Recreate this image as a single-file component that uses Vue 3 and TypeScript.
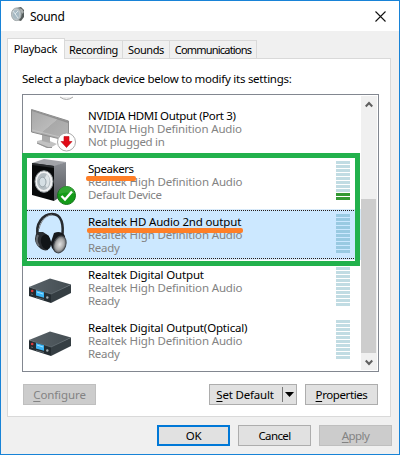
<script setup lang="ts">
type Device = { name: string; driver: string; status: string; icon: 'monitor' | 'speaker' | 'headphones' | 'receiver'; level: number; meter: boolean; selected?: boolean; cls: string }

const devices: Device[] = [
  { name: 'NVIDIA HDMI Output (Port 3)', driver: 'NVIDIA High Definition Audio', status: 'Not plugged in', icon: 'monitor', level: 0, meter: false, cls: 'nvidia' },
  { name: 'Speakers', driver: 'Realtek High Definition Audio', status: 'Default Device', icon: 'speaker', level: 2, meter: true, cls: 'speakers' },
  { name: 'Realtek HD Audio 2nd output', driver: 'Realtek High Definition Audio', status: 'Ready', icon: 'headphones', level: 0, meter: true, selected: true, cls: 'second' },
  { name: 'Realtek Digital Output', driver: 'Realtek High Definition Audio', status: 'Ready', icon: 'receiver', level: 0, meter: true, cls: 'digital' },
  { name: 'Realtek Digital Output(Optical)', driver: 'Realtek High Definition Audio', status: 'Ready', icon: 'receiver', level: 0, meter: true, cls: 'optical' },
]
const tabs = ['Playback', 'Recording', 'Sounds', 'Communications']
</script>

<template>
  <div class="window">
    <header class="titlebar">
      <svg class="app-icon" width="14" height="16" viewBox="0 0 14 16">
        <path d="M5 1l5-1 3 3v7l-3 4-4-1z" fill="#555c5c" />
        <path d="M8 1l3 1 2 3-2 2z" fill="#a9afaf" />
        <ellipse cx="5.3" cy="7.3" rx="4.8" ry="6.3" fill="#bcc5c9" stroke="#a3abad" />
        <ellipse cx="5" cy="7.5" rx="3.1" ry="4.3" fill="#a7bac4" />
        <path d="M2 4l5 7M7 4l-3 3" stroke="#dde6ea" />
      </svg>
      <h1>Sound</h1>
      <svg class="close" width="11" height="11" viewBox="0 0 11 11"><path d="M.5.5l10 10M10.5.5l-10 10" stroke="#111" stroke-width="1.1" /></svg>
    </header>

    <nav class="tabs">
      <div v-for="(t, i) in tabs" :key="t" class="tab" :class="['tab' + i, { active: i === 0 }]"><span>{{ t }}</span></div>
    </nav>

    <main class="panel">
      <p class="hint">Select a playback device below to modify its settings:</p>
      <div class="list">
        <div class="rows">
          <svg class="previous" width="18" height="5" viewBox="0 0 18 5"><path d="M2 0q6.500 5 13 0" fill="#eee" stroke="#aaa" /></svg>
          <div v-for="d in devices" :key="d.name" class="row" :class="[d.cls, { selected: d.selected }]">
            <div class="icon">
              <svg v-if="d.icon === 'monitor'" width="48" height="50" viewBox="0 0 48 50">
                <defs><linearGradient id="scr" x1="0" y1="0" x2="1" y2="1"><stop offset="0" stop-color="#a6a6a6" /><stop offset=".5" stop-color="#bababa" /><stop offset=".51" stop-color="#a9a9a9" /><stop offset="1" stop-color="#b5b5b5" /></linearGradient></defs>
                <path d="M9 38l8-2 12 5-6 3.500-5 0-9-4z" fill="#c2c2c2" /><path d="M9 39.500l11 4.500h4v1h-5L9 40.500z" fill="#929292" />
                <path d="M14 31l8 2v7l-8-2z" fill="#aaa" />
                <path d="M3.500 6.500L40.500 18v20L3.500 29z" fill="url(#scr)" stroke="#8d8d8d" />
                <path d="M4 7l36 11.300V20L4 8z" fill="#8f8f8f" /><path d="M4 27l36 9" stroke="#ccc" stroke-width=".7" />
                <circle cx="38.500" cy="39" r="9" fill="#fff" stroke="#aaa" />
                <path d="M36 33.500h5v5h3l-5.500 6-5.500-6h3z" fill="#e10b17" stroke="#b80b13" stroke-width=".6" />
              </svg>
              <svg v-else-if="d.icon === 'speaker'" width="48" height="50" viewBox="0 0 48 50">
                <defs><linearGradient id="side" x2="0" y2="1"><stop stop-color="#8a8d93" /><stop offset="1" stop-color="#53565c" /></linearGradient></defs>
                <path d="M4 7l12-4 22 3-12 5z" fill="#a2a4a9" /><path d="M26 10l12-4v31L26 45z" fill="url(#side)" />
                <path d="M4 7l22 3v35L4 39z" fill="#080a0b" /><path d="M4 7l22 3v2L4 9z" fill="#292c2f" />
                <ellipse cx="16" cy="25.500" rx="9" ry="10.800" fill="#f1f2f3" stroke="#8f969a" />
                <ellipse cx="15.700" cy="25.500" rx="6.700" ry="8.500" fill="#b4bdc2" />
                <path d="M15 25l4-7q5 7 0 14z" fill="#dfe5e8" />
                <ellipse cx="14.500" cy="26" rx="3.500" ry="4.800" fill="#d5dfe4" stroke="#99a5ab" />
                <circle cx="38.500" cy="39.500" r="9" fill="#139b18" stroke="#14741b" />
                <path d="M30.500 38a8 8 0 0 1 16 0q-8-3-16 0" fill="#4ab348" opacity=".5" />
                <path d="M33.500 40l3.500 3.500 7-8" fill="none" stroke="#fff" stroke-width="2.400" />
              </svg>
              <svg v-else-if="d.icon === 'headphones'" width="48" height="48" viewBox="0 0 48 48">
                <defs><radialGradient id="cup"><stop stop-color="#e4e4e4" /><stop offset=".65" stop-color="#a8a8a8" /><stop offset="1" stop-color="#606366" /></radialGradient></defs>
                <path d="M10 26C7 14 15 4 24 4c10 0 12 11 10 24" fill="none" stroke="#272a2e" stroke-width="2.600" />
                <path d="M11 19C13 10 19 5 24 5" fill="none" stroke="#85898d" />
                <path d="M9 22q-4 7 0 13 5 7 11 5l2-6-1-8-6-4z" fill="#292c30" />
                <ellipse cx="18" cy="32" rx="5" ry="7.500" fill="#111417" transform="rotate(-12 18 32)" />
                <path d="M10 25q-3 6 1 11" fill="none" stroke="#65696e" stroke-width="2" />
                <path d="M26 23q7-3 11 3l-1 11-7 6q-7-4-6-11z" fill="#17191d" />
                <ellipse cx="32" cy="34.500" rx="6" ry="8.700" fill="url(#cup)" stroke="#45494e" transform="rotate(20 32 34)" />
              </svg>
              <svg v-else width="48" height="48" viewBox="0 0 48 48">
                <defs><linearGradient id="box"><stop stop-color="#596268" /><stop offset="1" stop-color="#444d52" /></linearGradient></defs>
                <path d="M1 25L22 16.500l21 6L23 33z" fill="url(#box)" /><path d="M23 32l20-9.500v8.500L23 41z" fill="#353e43" />
                <path d="M1 25l22 7v9L1 34z" fill="#242c31" /><path d="M1 25l22 7 20-9.500" fill="none" stroke="#7b858a" stroke-width=".5" />
                <path d="M8 28l8 2.300v5.500L8 33.500z" fill="#3bb4f4" /><path d="M9 29.500l6 2v1l-6-2z" fill="#a3e2ff" />
                <circle cx="4.200" cy="29" r="1.300" fill="#df3b3a" /><circle cx="19.300" cy="35.500" r="1.200" fill="#a6aeb2" /><path d="M3 32l2 .6M8 35.500l8 2" stroke="#68737a" stroke-width=".8" />
              </svg>
            </div>
            <div class="info">
              <div class="name"><span>{{ d.name }}</span></div>
              <div class="driver"><span>{{ d.driver }}</span></div>
              <div class="status"><span>{{ d.status }}</span></div>
            </div>
            <div v-if="d.meter" class="meter"><i v-for="n in 10" :key="n" :class="{ on: n > 10 - d.level }" /></div>
          </div>
        </div>
        <div class="scrollbar">
          <svg width="8" height="7" viewBox="0 0 8 7"><path d="M.7 5.500L4 2l3.300 3.500" fill="none" stroke="#606060" stroke-width="2.200" /></svg>
          <div class="thumb" />
          <svg width="8" height="7" viewBox="0 0 8 7"><path d="M.7 1.500L4 5l3.300-3.500" fill="none" stroke="#606060" stroke-width="2.200" /></svg>
        </div>
        <div class="highlight" />
        <div class="marker marker-a" />
        <div class="marker marker-b" />
      </div>
      <div class="actions">
        <button class="configure" disabled><span><u>C</u>onfigure</span></button>
        <button class="default"><span><u>S</u>et Default</span><b /><svg width="9" height="5" viewBox="0 0 9 5"><path d="M0 0h9L4.500 5z" /></svg></button>
        <button class="properties"><span><u>P</u>roperties</span></button>
      </div>
    </main>
    <footer class="footer">
      <button class="primary"><span>OK</span></button>
      <button class="cancel"><span>Cancel</span></button>
      <button class="apply" disabled><span><u>A</u>pply</span></button>
    </footer>
  </div>
</template>

<style>
body { margin: 0; background: #fff; }
</style>
<style scoped>
* { box-sizing: border-box; }
.window { width: 400px; height: 455px; border: 1px solid #1883d7; background: #f0f0f0; font: 11.5px/13px "Noto Sans", "Open Sans", sans-serif; color: #000; white-space: nowrap; }
.titlebar { height: 30px; background: #fff; display: flex; align-items: center; padding: 0 12px 0 10px; }
.app-icon { margin-top: -2px; }
h1 { margin: 0 0 0 5px; font-size: 12px; font-weight: 400; letter-spacing: -.3px; flex: 1; }
.close { margin-right: 1px; }
.tabs { height: 21px; margin-top: 6px; padding-left: 6px; display: flex; align-items: flex-end; position: relative; z-index: 1; font-size: 11px; letter-spacing: -.4px; }
.tab { height: 18px; border: 1px solid #d9d9d9; border-left: 0; border-bottom: 0; display: flex; justify-content: center; align-items: center; }
.tab0 { width: 58px; height: 21px; margin-bottom: -1px; padding: 0 1px 2px 0; border-left: 1px solid #d9d9d9; background: #fff; letter-spacing: -.25px; }
.tab1 { width: 58px; }
.tab2 { width: 47px; }
.tab3 { width: 87px; letter-spacing: -.8px; }
.panel { margin: 0 8px 0 6px; height: 359px; border: 1px solid #d9d9d9; background: #fff; padding: 12px 11px 0 14px; display: flex; flex-direction: column; }
.hint { margin: 0; height: 23px; line-height: 15px; letter-spacing: -.26px; }
.list { position: relative; width: 357px; height: 278px; flex: none; border: 1px solid #828790; display: flex; justify-content: space-between; padding: 1px; }
.rows { width: 337px; height: 274px; overflow: hidden; }
.previous { display: block; margin-left: 34px; height: 7px; }
.row { height: 53px; display: flex; padding-left: 4px; }
.row.selected { height: 51px; margin-bottom: 2px; background: #cce8ff; border: 1px solid #d9eaf9; padding-left: 3px; outline: 1px dotted #241b17; outline-offset: -2px; }
.icon { width: 48px; height: 48px; flex: none; }
.info { margin: 6px 0 0 12px; width: 222px; color: #838383; letter-spacing: -.16px; }
.name { color: #000; }
.nvidia .name { letter-spacing: -.36px; }
.speakers .name { letter-spacing: -.45px; }
.status { letter-spacing: -.3px; }
.selected .info { margin-top: 5px; }
.meter { margin: 5px 0 0 26px; width: 14px; display: flex; flex-direction: column; gap: 1px; }
.selected .meter { margin-top: 4px; }
.meter i { height: 3px; background: #c1dce3; }
.selected .meter i { background: #99cae2; }
.meter i.on { background: #339933; }
.scrollbar { width: 16px; height: 274px; background: #f0f0f0; display: flex; flex-direction: column; }
.scrollbar svg { margin: 5px 0 0 4px; flex: none; }
.scrollbar svg:last-child { margin-top: 6px; }
.thumb { width: 15px; height: 154px; margin-top: 91px; background: #cdcdcd; }
.highlight { position: absolute; left: -1px; top: 58px; width: 338px; height: 113px; border: 5px solid #22b14c; }
.marker { position: absolute; height: 5px; border-radius: 2px; background: #ff7f27; }
.marker-a { left: 63px; top: 81px; width: 50px; }
.marker-b { left: 64px; top: 133px; width: 156px; }
.actions { display: flex; padding: 12px 0 0 1px; }
button { height: 21px; width: 73px; padding: 0; border: 1px solid #adadad; background: #e1e1e1; font: inherit; letter-spacing: -.3px; color: #000; display: flex; align-items: center; justify-content: center; }
button:disabled { background: #ccc; border-color: #bfbfbf; color: #838383; }
.configure { letter-spacing: -.1px; }
u { text-decoration: underline; text-underline-offset: 2px; text-decoration-thickness: 1px; text-decoration-skip-ink: none; }
.default { width: 88px; margin: 0 8px 0 113px; padding-left: 4px; letter-spacing: -.2px; }
.default b { width: 1px; height: 15px; background: #777; margin: 0 2px 0 8px; }
.properties { letter-spacing: -.4px; }
.footer { display: flex; gap: 8px; padding: 8px 0 0 156px; }
.footer .primary { border: 2px solid #0078d7; }
.footer .cancel, .footer .apply { letter-spacing: -.6px; }
</style>
